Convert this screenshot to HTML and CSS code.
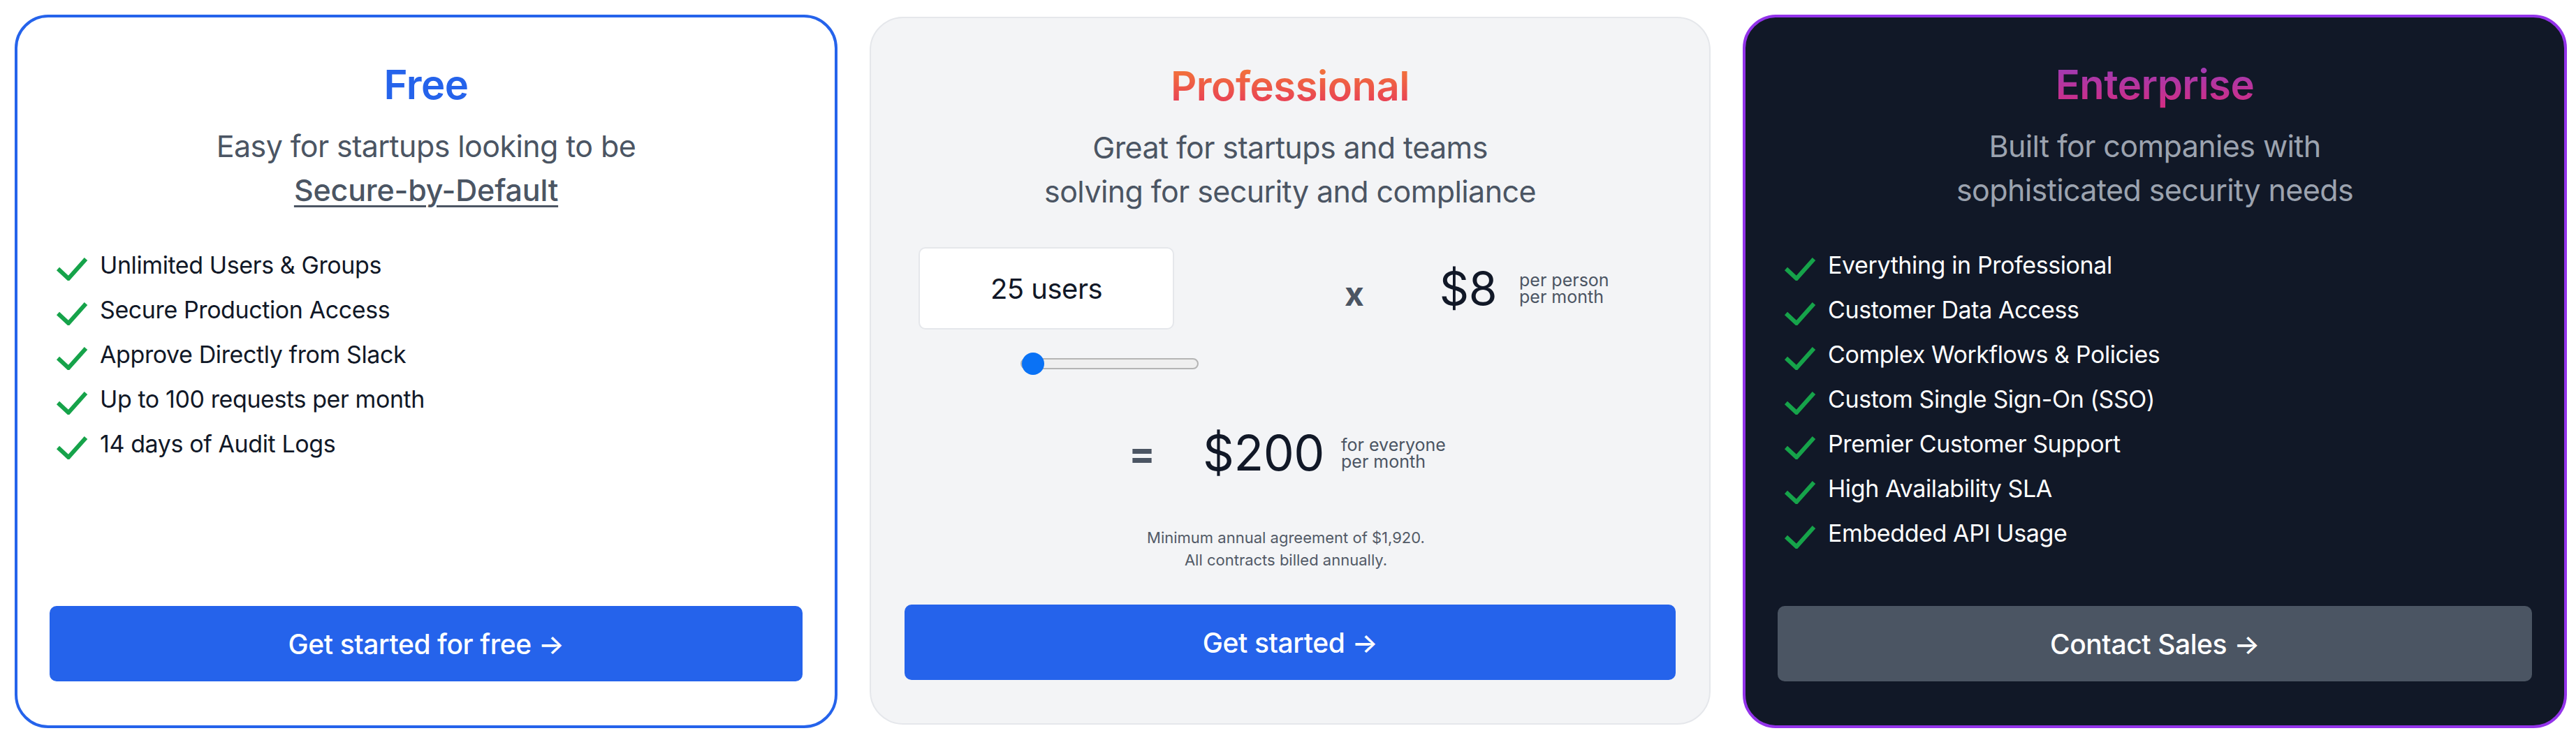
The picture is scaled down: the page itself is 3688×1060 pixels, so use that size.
FILE: index.html
```html
<!DOCTYPE html>
<html lang="en">
<head>
<meta charset="utf-8">
<title>Pricing</title>
<link rel="stylesheet" href="styles.css">
</head>
<body>
<div class="plans">
  <section class="card card-free">
    <h2 class="title title-free">Free</h2>
    <p class="subtitle">Easy for startups looking to be<br><span class="underline">Secure-by-Default</span></p>
    <ul class="features">
      <li><svg class="check" viewBox="0 0 46 34"><path d="M3 17 L18 31 L43 3"/></svg><span>Unlimited Users &amp; Groups</span></li>
      <li><svg class="check" viewBox="0 0 46 34"><path d="M3 17 L18 31 L43 3"/></svg><span>Secure Production Access</span></li>
      <li><svg class="check" viewBox="0 0 46 34"><path d="M3 17 L18 31 L43 3"/></svg><span>Approve Directly from Slack</span></li>
      <li><svg class="check" viewBox="0 0 46 34"><path d="M3 17 L18 31 L43 3"/></svg><span>Up to 100 requests per month</span></li>
      <li><svg class="check" viewBox="0 0 46 34"><path d="M3 17 L18 31 L43 3"/></svg><span>14 days of Audit Logs</span></li>
    </ul>
    <a class="btn btn-blue" href="#">Get started for free →</a>
  </section>

  <section class="card card-pro">
    <h2 class="title title-pro">Professional</h2>
    <p class="subtitle">Great for startups and teams<br>solving for security and compliance</p>
    <div class="calc-row">
      <div class="users-box">25 users</div>
      <span class="op op-x">x</span>
      <span class="price">$8</span>
      <span class="unit">per person<br>per month</span>
    </div>
    <input class="slider" type="range" min="25" max="500" value="25">
    <div class="total-row">
      <span class="op op-eq">=</span>
      <span class="price price-total">$200</span>
      <span class="unit">for everyone<br>per month</span>
    </div>
    <p class="note">Minimum annual agreement of $1,920.<br>All contracts billed annually.</p>
    <a class="btn btn-blue" href="#">Get started →</a>
  </section>

  <section class="card card-ent">
    <h2 class="title title-ent">Enterprise</h2>
    <p class="subtitle subtitle-dark">Built for companies with<br>sophisticated security needs</p>
    <ul class="features features-dark">
      <li><svg class="check" viewBox="0 0 46 34"><path d="M3 17 L18 31 L43 3"/></svg><span>Everything in Professional</span></li>
      <li><svg class="check" viewBox="0 0 46 34"><path d="M3 17 L18 31 L43 3"/></svg><span>Customer Data Access</span></li>
      <li><svg class="check" viewBox="0 0 46 34"><path d="M3 17 L18 31 L43 3"/></svg><span>Complex Workflows &amp; Policies</span></li>
      <li><svg class="check" viewBox="0 0 46 34"><path d="M3 17 L18 31 L43 3"/></svg><span>Custom Single Sign-On (SSO)</span></li>
      <li><svg class="check" viewBox="0 0 46 34"><path d="M3 17 L18 31 L43 3"/></svg><span>Premier Customer Support</span></li>
      <li><svg class="check" viewBox="0 0 46 34"><path d="M3 17 L18 31 L43 3"/></svg><span>High Availability SLA</span></li>
      <li><svg class="check" viewBox="0 0 46 34"><path d="M3 17 L18 31 L43 3"/></svg><span>Embedded API Usage</span></li>
    </ul>
    <a class="btn btn-gray" href="#">Contact Sales →</a>
  </section>
</div>
</body>
</html>
```

FILE: styles.css
```css
* { box-sizing: border-box; }

html, body {
  margin: 0;
  background: #ffffff;
}

body {
  padding: 21px 0 0 21px;
  font-family: Inter, "Noto Sans", "Liberation Sans", sans-serif;
  color: #111827;
}

.plans {
  display: flex;
  align-items: flex-start;
  gap: 46px;
}

.card {
  display: flex;
  flex-direction: column;
  border-radius: 48px;
  padding: 58px 46px 63px;
}

.card-free {
  width: 1178px;
  height: 1022px;
  border: 4px solid #2563eb;
  background: #ffffff;
}

.card-pro {
  width: 1204px;
  height: 1014px;
  margin-top: 3px;
  padding: 59px 48px 62px;
  border: 2px solid #e5e7eb;
  background: #f3f4f6;
}

.card-ent {
  width: 1180px;
  height: 1022px;
  border: 4px solid #9333ea;
  background: #111827;
}

.title {
  margin: 0;
  font-size: 58px;
  line-height: 77px;
  font-weight: 600;
  text-align: center;
  letter-spacing: -0.5px;
}

.title-free { color: #2563eb; }

.title-pro,
.title-ent {
  align-self: center;
  -webkit-background-clip: text;
  background-clip: text;
  color: transparent;
}

.title-pro { background-image: linear-gradient(180deg, #f47a36 10%, #e6355c 95%); }
.title-ent { background-image: linear-gradient(180deg, #9a3cb8 10%, #d62c80 95%); }

.subtitle {
  margin: 18px 0 0;
  font-size: 43px;
  line-height: 63px;
  color: #4b5563;
  text-align: center;
  letter-spacing: -0.6px;
}

.subtitle-dark { color: #9ca3af; }

.underline {
  text-decoration: underline;
  text-decoration-thickness: 3px;
  text-underline-offset: 6px;
  font-weight: 500;
  letter-spacing: -0.2px;
}

.features {
  list-style: none;
  margin: 44px 0 0 9px;
  padding: 0;
}

.features li {
  display: flex;
  align-items: flex-start;
  height: 64px;
  font-size: 34px;
  line-height: 64px;
  color: #111827;
  letter-spacing: -0.4px;
}

.features-dark li { color: #ffffff; }

.check {
  width: 46px;
  height: 34px;
  margin: 20px 17px 0 0;
  flex: none;
  fill: none;
  stroke: #16a34a;
  stroke-width: 6;
}

.btn {
  margin-top: auto;
  display: flex;
  align-items: center;
  justify-content: center;
  height: 108px;
  border-radius: 10px;
  font-size: 39px;
  font-weight: 500;
  color: #ffffff;
  text-decoration: none;
  letter-spacing: -0.4px;
}

.btn-blue { background: #2563eb; }
.btn-gray { background: #4b5563; }

.calc-row {
  display: flex;
  align-items: center;
  margin-top: 48px;
}

.users-box {
  width: 366px;
  height: 118px;
  margin-left: 20px;
  display: flex;
  align-items: center;
  justify-content: center;
  background: #ffffff;
  border: 2px solid #e5e7eb;
  border-radius: 10px;
  font-size: 40px;
  color: #111827;
  letter-spacing: -0.5px;
}

.op {
  font-weight: 700;
  color: #4b5563;
  font-size: 48px;
  line-height: 48px;
}

.op-x {
  margin-left: 244px;
  margin-top: 16px;
}

.price {
  margin-left: 108px;
  font-size: 66px;
  line-height: 66px;
  color: #111827;
  letter-spacing: -0.5px;
}

.unit {
  margin-left: 32px;
  font-size: 25px;
  line-height: 24px;
  color: #4b5563;
}

.slider {
  -webkit-appearance: none;
  appearance: none;
  display: block;
  width: 255px;
  height: 32px;
  margin: 33px 0 0 166px;
  padding: 0;
  background: transparent;
}

.slider::-webkit-slider-runnable-track {
  height: 16px;
  border: 2px solid #b4b4b4;
  border-radius: 8px;
  background: #efefef;
  box-sizing: border-box;
}

.slider::-webkit-slider-thumb {
  -webkit-appearance: none;
  appearance: none;
  width: 32px;
  height: 32px;
  margin-top: -10px;
  border-radius: 50%;
  background: #0a72f5;
  border: none;
}

.total-row {
  display: flex;
  align-items: center;
  justify-content: center;
  margin-top: 78px;
  padding-right: 8px;
}

.op-eq {
  font-size: 56px;
  line-height: 56px;
  margin-right: 68px;
}

.price-total {
  margin-left: 0;
  font-size: 70px;
  line-height: 67px;
}

.total-row .unit { margin-left: 24px; }

.note {
  margin: 72px 0 0;
  padding-right: 12px;
  font-size: 22px;
  line-height: 32px;
  color: #525a66;
  text-align: center;
}
```
